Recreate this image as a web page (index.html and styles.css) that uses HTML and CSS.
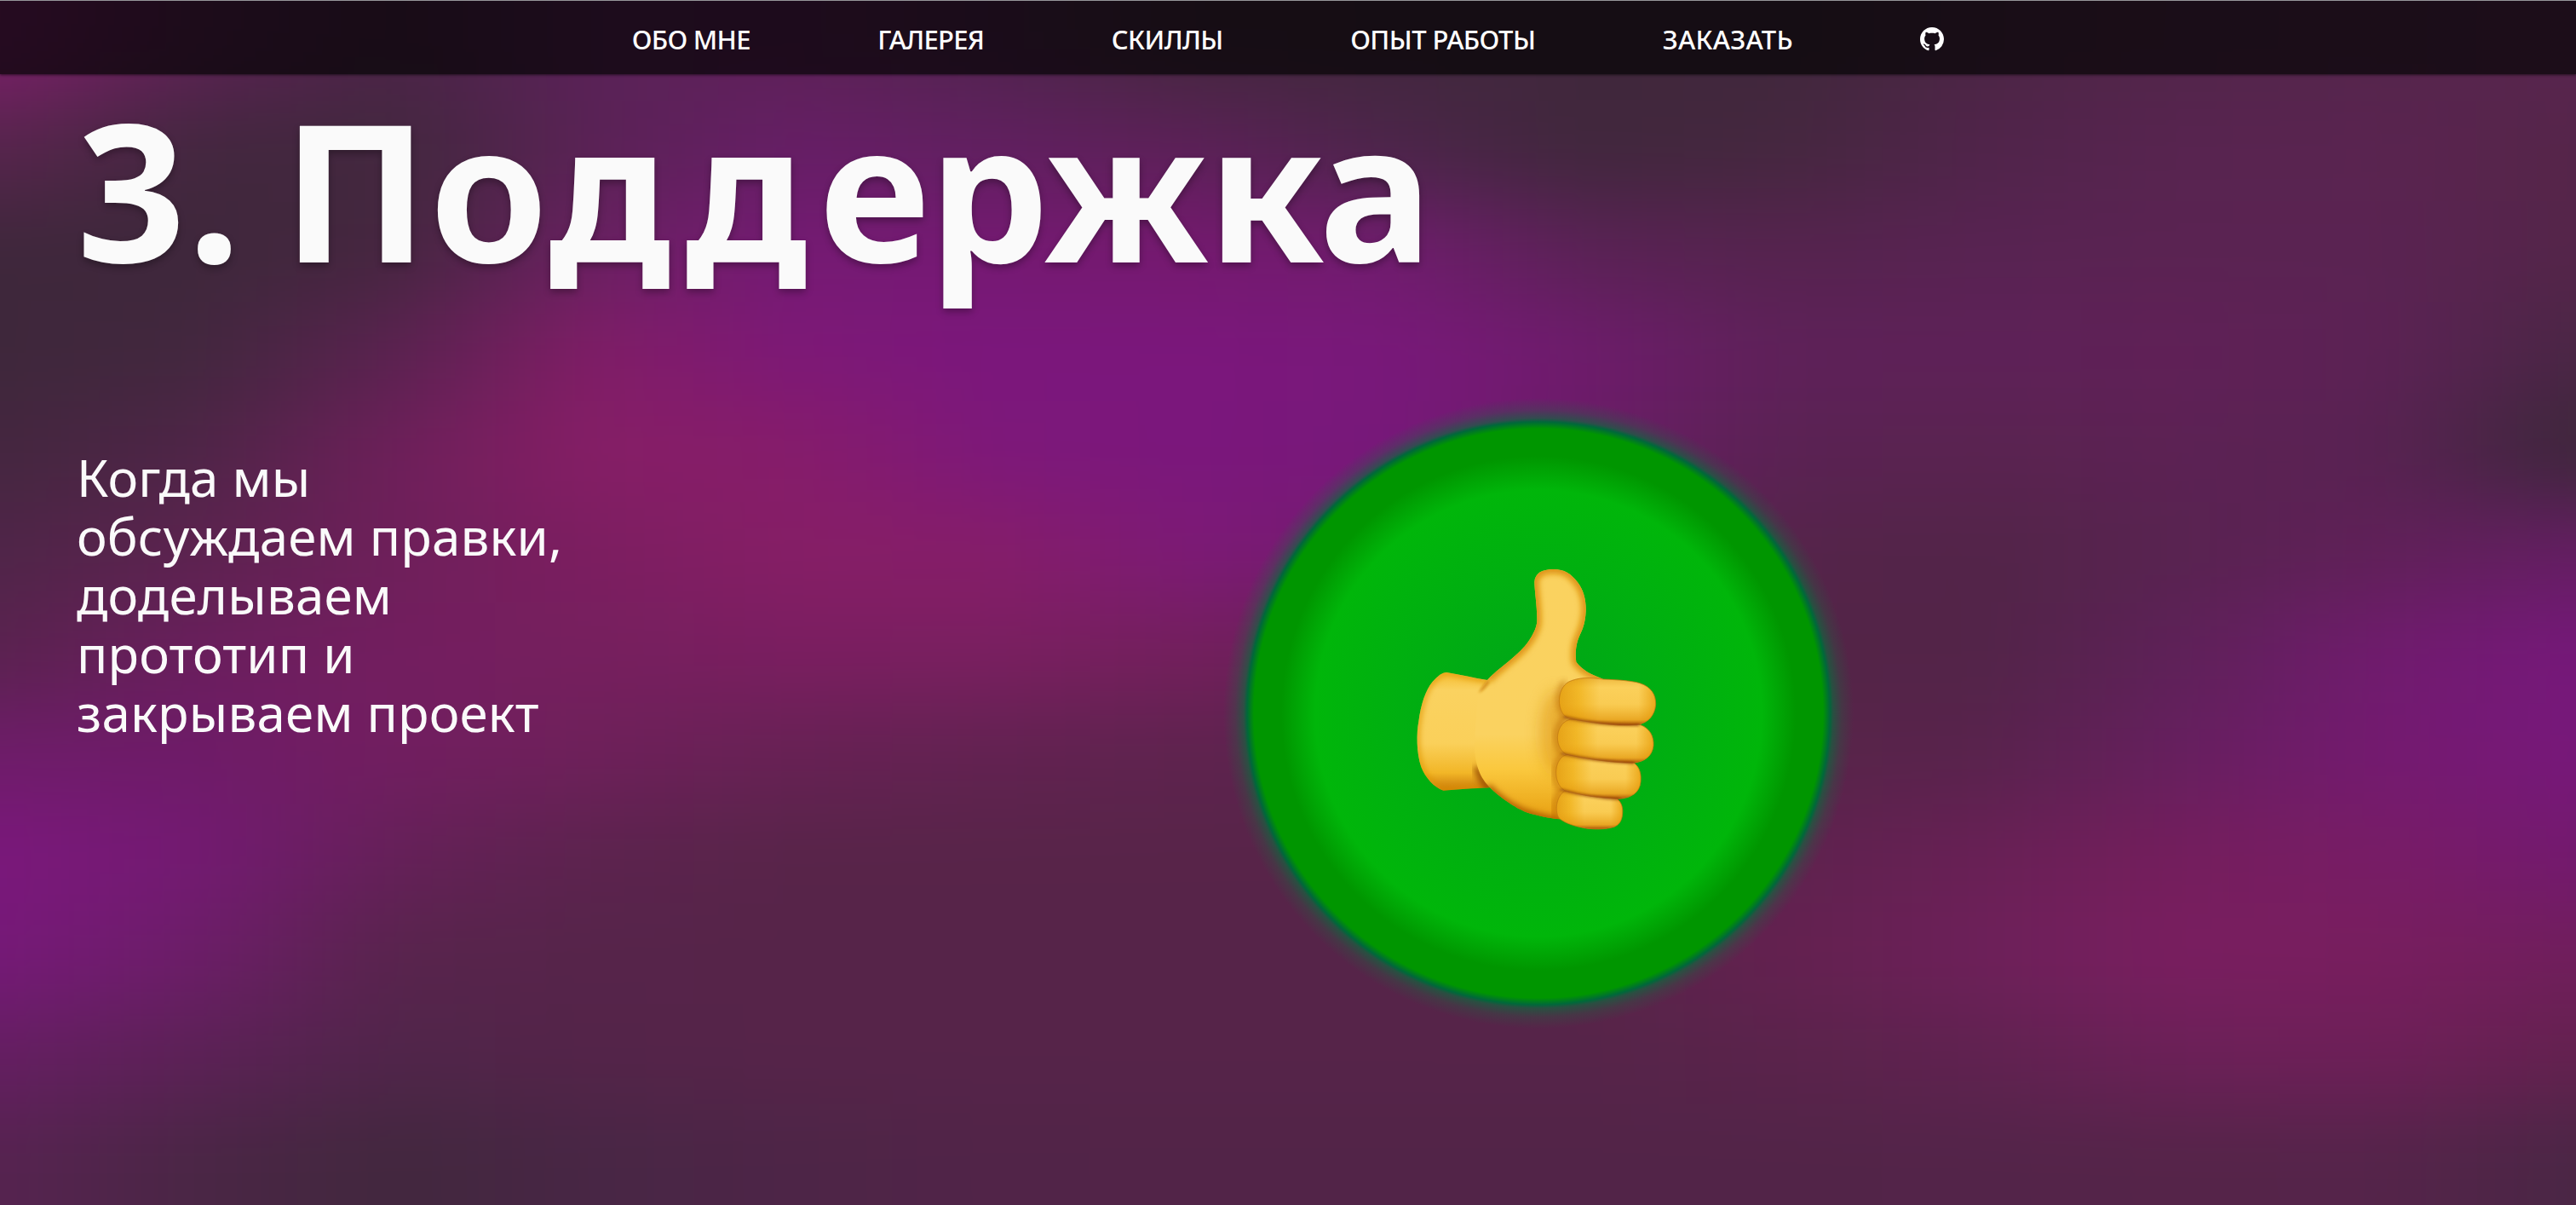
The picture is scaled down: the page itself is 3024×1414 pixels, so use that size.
FILE: index.html
```html
<!DOCTYPE html>
<html lang="ru">
<head>
<meta charset="utf-8">
<title>Поддержка</title>
<link rel="stylesheet" href="styles.css">
</head>
<body>
<div class="backdrop-clip" aria-hidden="true">
<div class="backdrop">
  <div class="band b1"></div><div class="band b2"></div><div class="band b3"></div><div class="band b4"></div>
  <div class="band b5"></div><div class="band b6"></div><div class="band b7"></div><div class="band b8"></div>
  <div class="band b9"></div><div class="band b10"></div><div class="band b11"></div><div class="band b12"></div>
</div>
</div>
<header class="header">
  <nav class="nav">
    <a class="link about">ОБО МНЕ</a>
    <a class="link gallery">ГАЛЕРЕЯ</a>
    <a class="link skills">СКИЛЛЫ</a>
    <a class="link work">ОПЫТ РАБОТЫ</a>
    <a class="link order">ЗАКАЗАТЬ</a>
    <a class="github" aria-label="GitHub"><svg viewBox="0 0 16 16" width="28" height="28"><path fill="#fff" d="M8 0C3.58 0 0 3.58 0 8c0 3.54 2.29 6.53 5.47 7.59.4.07.55-.17.55-.38 0-.19-.01-.82-.01-1.49-2.01.37-2.53-.49-2.69-.94-.09-.23-.48-.94-.82-1.13-.28-.15-.68-.52-.01-.53.63-.01 1.08.58 1.23.82.72 1.21 1.87.87 2.33.66.07-.52.28-.87.51-1.07-1.78-.2-3.64-.89-3.64-3.95 0-.87.31-1.59.82-2.15-.08-.2-.36-1.02.08-2.12 0 0 .67-.21 2.2.82.64-.18 1.32-.27 2-.27s1.36.09 2 .27c1.53-1.04 2.2-.82 2.2-.82.44 1.1.16 1.92.08 2.12.51.56.82 1.27.82 2.15 0 3.07-1.87 3.75-3.65 3.95.29.25.54.73.54 1.48 0 1.07-.01 1.93-.01 2.2 0 .21.15.46.55.38A8.01 8.01 0 0 0 16 8c0-4.42-3.58-8-8-8z"/></svg></a>
  </nav>
</header>
<main class="stage">
  <h1 class="title">3. По<span class="loose">дд</span><span class="tight">ержка</span></h1>
  <div class="content">
    <p class="text">Когда мы<br>обсуждаем правки,<br>доделываем<br>прототип и<br>закрываем проект</p>
    <div class="disc">
      <svg class="hand" viewBox="0 0 990 1050" width="330" height="350">
        <defs>
          <linearGradient id="palm" x1="0" y1="0" x2="0" y2="1">
            <stop offset="0" stop-color="#fad25f"/><stop offset=".66" stop-color="#fad260"/><stop offset=".8" stop-color="#fac83e"/><stop offset="1" stop-color="#e8a010"/>
          </linearGradient>
          <linearGradient id="wrist" x1="0" y1="0" x2="0" y2="1">
            <stop offset="0" stop-color="#f5bd30"/><stop offset=".15" stop-color="#fad260"/><stop offset=".6" stop-color="#fad05a"/><stop offset=".85" stop-color="#f2b627"/><stop offset="1" stop-color="#c87808"/>
          </linearGradient>
          <linearGradient id="finger" x1="0" y1="0" x2="1" y2="0">
            <stop offset="0" stop-color="#e6a318"/><stop offset=".2" stop-color="#f2b828"/><stop offset=".42" stop-color="#fbd05a"/><stop offset=".82" stop-color="#fbd05a"/><stop offset="1" stop-color="#eca91c"/>
          </linearGradient>
          <linearGradient id="under" x1="0" y1="0" x2="0" y2="1">
            <stop offset="0" stop-color="#d08410" stop-opacity=".35"/><stop offset=".2" stop-color="#e09a10" stop-opacity="0"/><stop offset=".55" stop-color="#e9a010" stop-opacity=".1"/><stop offset=".88" stop-color="#e09208" stop-opacity=".65"/><stop offset="1" stop-color="#a85008"/>
          </linearGradient>
          <filter id="soft" x="-30%" y="-30%" width="160%" height="160%"><feGaussianBlur stdDeviation="11"/></filter>
          <filter id="fine" x="-30%" y="-30%" width="160%" height="160%"><feGaussianBlur stdDeviation="4"/></filter>
          <filter id="wide" x="-60%" y="-60%" width="220%" height="220%"><feGaussianBlur stdDeviation="26"/></filter>
          <path id="palmShape" d="M318 474C350 438 410 400 450 355C475 325 493 290 493 265C494 215 484 160 484 128C486 98 510 84 550 84C590 84 611 98 636 130C656 156 666 190 665 230C663 280 650 300 640 325C629 352 627 385 631 410C650 438 685 455 725 470L660 560L620 780L575 964C540 962 490 950 460 941C405 920 350 875 326 851C295 820 275 780 272 700L285 520Z"/>
          <path id="wristShape" d="M175 447C225 455 270 467 318 474L340 600L326 853C270 855 210 860 163 863C130 852 100 818 85 780C68 730 68 660 76 620C84 560 100 510 125 480C145 458 158 448 175 447Z"/>
          <clipPath id="palmClip"><use href="#palmShape"/></clipPath>
          <clipPath id="wristClip"><use href="#wristShape"/></clipPath>
        </defs>
        <use href="#wristShape" fill="url(#wrist)"/>
        <g clip-path="url(#wristClip)">
          <path d="M318 474C270 467 225 455 175 447C158 448 145 458 125 480C100 510 84 560 76 620C68 660 68 730 85 780C100 818 130 852 163 863L326 853" fill="none" stroke="#df9410" stroke-width="14" filter="url(#soft)"/>
          <path d="M280 780Q295 825 330 865" fill="none" stroke="#8e4306" stroke-width="26" opacity=".8" filter="url(#soft)"/>
        </g>
        <use href="#palmShape" fill="url(#palm)"/>
        <g clip-path="url(#palmClip)">
          <path d="M318 474C350 438 410 400 450 355C475 325 493 290 493 265C494 215 484 160 484 128C486 98 510 84 550 84C590 84 611 98 636 130C656 156 666 190 665 230C663 280 650 300 640 325C629 352 627 385 631 410C650 438 685 455 725 470" fill="none" stroke="#dc8f0c" stroke-width="28" filter="url(#soft)"/>
          <path d="M318 850C350 885 390 915 440 938C490 956 530 968 590 974" fill="none" stroke="#b15d06" stroke-width="28" filter="url(#soft)"/>
          <ellipse cx="565" cy="660" rx="62" ry="150" fill="#e09a12" opacity=".6" filter="url(#wide)"/>
          <path d="M590 480Q550 540 590 605Q540 660 580 740Q535 800 575 865Q545 910 560 970" fill="none" stroke="#b96608" stroke-width="14" opacity=".8" filter="url(#soft)"/>
        </g>
        <path d="M320 472Q300 492 287 520Q310 510 326 484Z" fill="#d08510" opacity=".75" filter="url(#fine)"/>
        <g stroke="#c27712" stroke-opacity=".45" stroke-width="3">
          <path fill="url(#finger)" d="M590 864L775 892C792 906 796 925 794 945C792 972 780 984 765 991C735 1000 700 1000 665 996C625 989 596 979 575 964C556 950 554 890 590 864Z"/>
          <path fill="url(#under)" d="M590 864L775 892C792 906 796 925 794 945C792 972 780 984 765 991C735 1000 700 1000 665 996C625 989 596 979 575 964C556 950 554 890 590 864Z"/>
          <path fill="url(#finger)" d="M600 736L835 766C856 783 860 805 858 832C855 870 825 889 785 892C715 890 650 880 590 863C545 835 552 745 600 736Z"/>
          <path fill="url(#under)" d="M600 736L835 766C856 783 860 805 858 832C855 870 825 889 785 892C715 890 650 880 590 863C545 835 552 745 600 736Z"/>
          <path fill="url(#finger)" d="M612 612L858 632C890 644 905 672 903 705C899 740 875 762 830 766C750 765 660 750 595 735C547 705 560 622 612 612Z"/>
          <path fill="url(#under)" d="M612 612L858 632C890 644 905 672 903 705C899 740 875 762 830 766C750 765 660 750 595 735C547 705 560 622 612 612Z"/>
          <path fill="url(#finger)" d="M725 471C780 473 830 477 855 485C895 498 912 525 911 560C908 598 885 625 845 632C760 638 680 622 605 609C560 590 560 505 605 480C640 464 680 464 725 471Z"/>
          <path fill="url(#under)" d="M725 471C780 473 830 477 855 485C895 498 912 525 911 560C908 598 885 625 845 632C760 638 680 622 605 609C560 590 560 505 605 480C640 464 680 464 725 471Z"/>
        </g>
        <g fill="none" stroke="#8f430b" stroke-width="8" stroke-linecap="round" opacity=".75" filter="url(#fine)">
          <path d="M590 604Q720 635 850 632"/><path d="M582 733Q700 760 832 766"/><path d="M578 860Q680 888 780 893"/>
        </g>
      </svg>
    </div>
  </div>
</main>
</body>
</html>
```
FILE: styles.css
```css
* { box-sizing: border-box; }
body {
  margin: 0;
  height: 1414px;
  overflow: hidden;
  background: #54244a;
  color: #fafafa;
  font-family: "Noto Sans", "Open Sans", sans-serif;
}
.backdrop-clip {
  position: absolute;
  inset: 0;
  z-index: -1;
  overflow: hidden;
}
.backdrop {
  height: 1614px;
  margin: -100px -150px;
  display: flex;
  flex-direction: column;
  filter: blur(46px);
}
.band { flex: 1; }
.b1, .b12 { flex: none; height: 218px; }
.b1 { background: linear-gradient(90deg, #7a1f68 150px, #5a2252, #4a2446, #5a2258, #5e2158, #522450, #45273f, #42273e, #40273c, #40273c, #4c2545, #52254a, #55254c, #58254e calc(100% - 150px)); }
.b2 { background: linear-gradient(90deg, #56254c 150px, #42273e, #42283e, #5a2255, #661e66, #611f60, #5c2058, #4c254a, #40273c, #45273f, #50244a, #582450, #5a2450, #552549 calc(100% - 150px)); }
.b3 { background: linear-gradient(90deg, #3e273b 150px, #3e273b, #45263f, #6a2062, #751a74, #751972, #75196f, #701c6e, #5a2255, #55234e, #582352, #5a2352, #5a2352, #542549 calc(100% - 150px)); }
.b4 { background: linear-gradient(90deg, #3e273b 150px, #42273e, #5a2250, #801d66, #7d1877, #7b177c, #7b177c, #79187a, #6e1b6c, #5e2159, #5e2158, #602057, #5c2255, #4a2645 calc(100% - 150px)); }
.b5 { background: linear-gradient(90deg, #44263f 150px, #4e2547, #6e1f5a, #861e66, #861c6a, #7d187a, #7b177c, #77187a, #6a1c66, #5a2253, #5a2350, #5c2254, #582252, #3c273a calc(100% - 150px)); }
.b6 { background: linear-gradient(90deg, #4f2548 150px, #5c234f, #6e1f5a, #7c1e60, #861e66, #861d69, #7c1a76, #741a70, #5e2055, #55244a, #522448, #582350, #602058, #641e62 calc(100% - 150px)); }
.b7 { background: linear-gradient(90deg, #5a224f 150px, #6a1e5d, #731e5f, #761f5e, #7a1e60, #7a1f60, #731f5c, #682056, #5a234c, #542447, #522448, #5e2158, #701b6e, #76187a calc(100% - 150px)); }
.b8 { background: linear-gradient(90deg, #6e1c69 150px, #6e1b68, #721e60, #6e205a, #672154, #622251, #5e234e, #5a244c, #58244a, #582449, #58234c, #661f5f, #741a70, #77187a calc(100% - 150px)); }
.b9 { background: linear-gradient(90deg, #7b177c 150px, #731a72, #652058, #5c234e, #582449, #582449, #582449, #582449, #58244a, #5e224e, #682055, #741e5c, #781c66, #73196f calc(100% - 150px)); }
.b10 { background: linear-gradient(90deg, #761978 150px, #6c1d68, #58244c, #56244a, #562449, #562449, #562449, #562449, #582449, #642150, #6e205a, #7a1e60, #781e5e, #701e5c calc(100% - 150px)); }
.b11 { background: linear-gradient(90deg, #651e62 150px, #5c2156, #50254a, #542449, #562449, #562449, #562449, #562449, #562449, #5a234b, #602250, #6c2058, #6e1f58, #64214f calc(100% - 150px)); }
.b12 { background: linear-gradient(90deg, #562350 150px, #4a2645, #42273e, #482645, #4d2547, #512448, #522448, #522448, #522448, #522448, #532449, #552449, #55244a, #4a2645 calc(100% - 150px)); }

.header {
  height: 87px;
  border-top: 1px solid #96969a;
  background: rgba(3, 3, 3, .7);
  box-shadow: 0 1px 3px rgba(0, 0, 0, .6);
}
.nav {
  height: 86px;
  padding-top: 4px;
  display: flex;
  justify-content: center;
  align-items: center;
  gap: 149.5px;
}
.link { font-size: 31px; line-height: 40px; font-weight: 500; color: #fff; white-space: nowrap; }
.about, .gallery { letter-spacing: -.7px; }
.skills, .work { letter-spacing: -.6px; }
.order { letter-spacing: .2px; }
.github { display: flex; }
.stage { padding: 0 90px; }
.title {
  margin: 0;
  padding-top: 10px;
  font-size: 224px;
  line-height: 250px;
  font-weight: 700;
  letter-spacing: 1.8px;
  word-spacing: -13px;
  white-space: nowrap;
  text-shadow: 0 4px 8px rgba(0, 0, 0, .3);
}
.loose { letter-spacing: 13px; }
.tight { letter-spacing: -2.2px; }
.content { display: flex; align-items: flex-start; padding-top: 110px; }
.text { margin: 0; padding-top: 69px; width: 1336px; font-size: 60px; line-height: 69px; letter-spacing: .2px; }
.disc {
  flex: none;
  width: 760px;
  height: 760px;
  display: flex;
  align-items: center;
  justify-content: center;
  background: radial-gradient(circle closest-side, #00a41a 0, #00b60a 262px, #009600 302px, #009600 334px, #00683a 342px, rgba(12, 106, 60, .62) 346px, rgba(20, 108, 60, .25) 356px, transparent 370px);
}
.hand { margin: -44px 0 0 -2px; }
```
